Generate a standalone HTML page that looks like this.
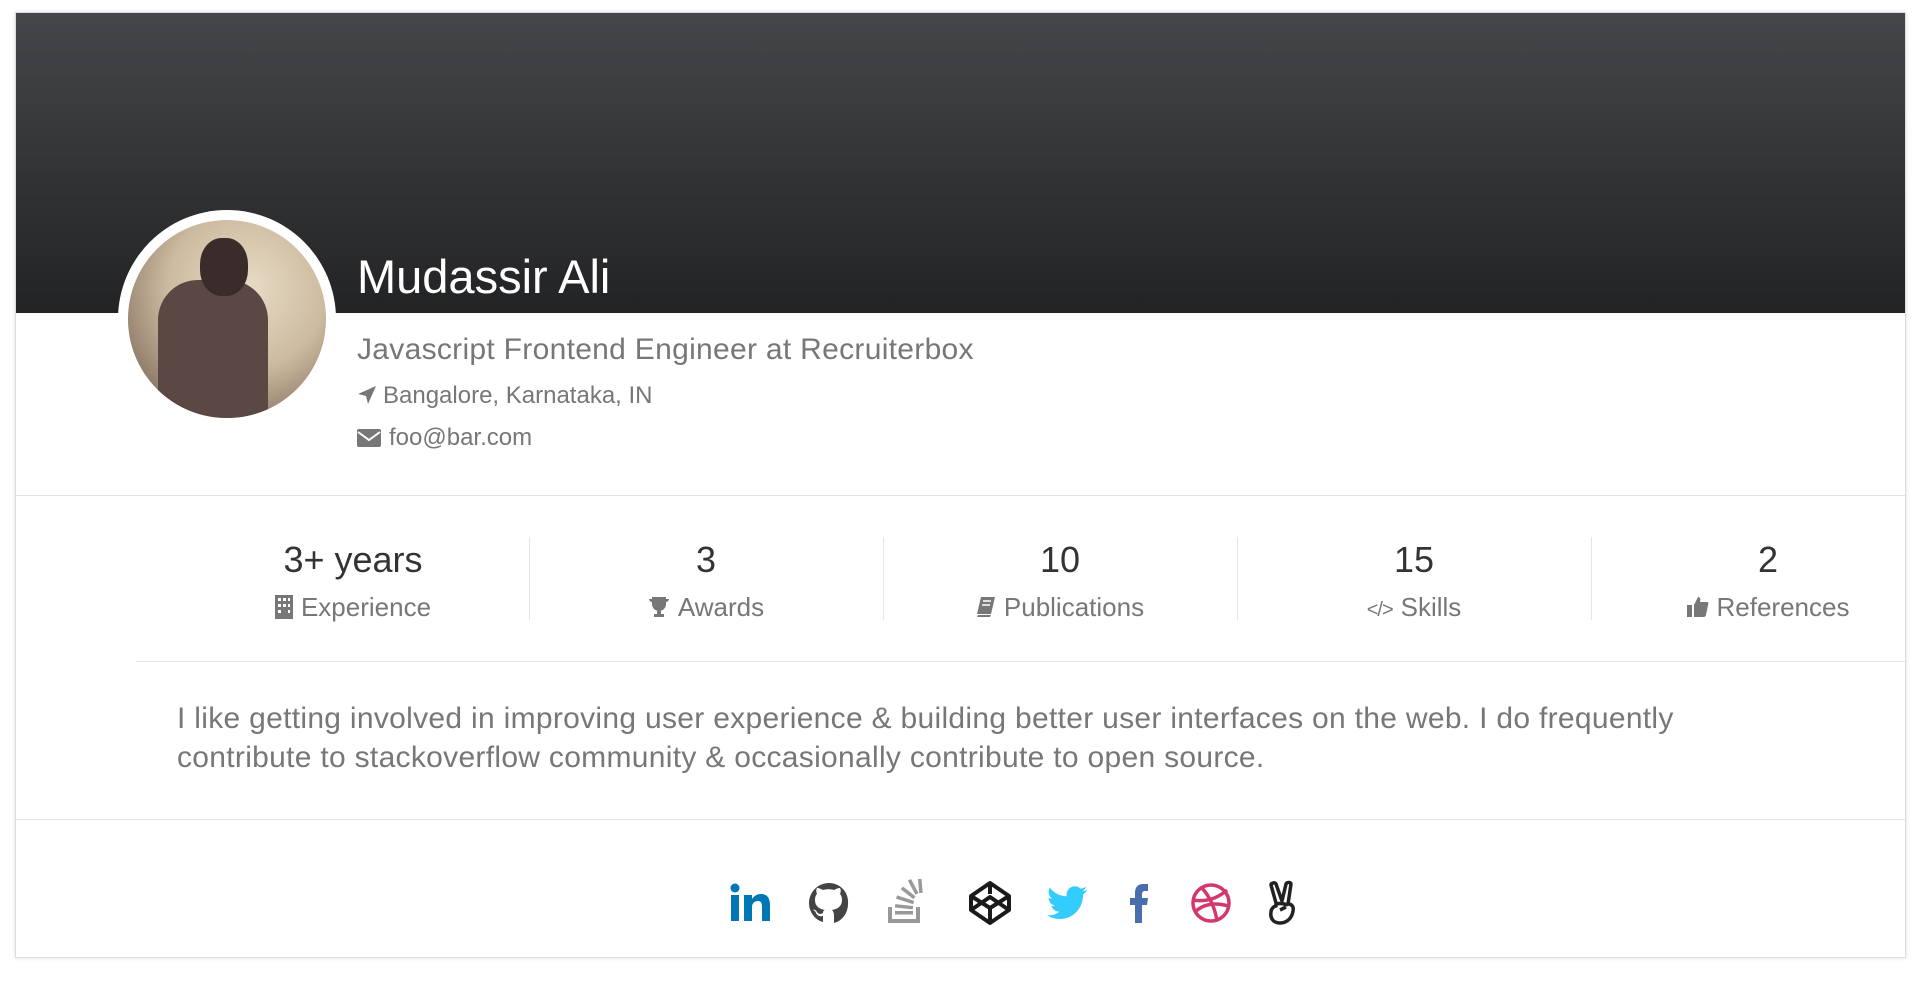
<!DOCTYPE html>
<html><head><meta charset="utf-8"><style>
*{margin:0;padding:0;box-sizing:border-box}
body{width:1926px;height:986px;background:#fff;font-family:"Liberation Sans",sans-serif;position:relative;overflow:hidden}
.card{position:absolute;left:15px;top:12px;width:1891px;height:946px;border:1px solid #ddd;box-shadow:0 0 4px rgba(0,0,0,.12);overflow:hidden;background:#fff}
.hdr{position:absolute;left:0;top:0;width:100%;height:300px;background:linear-gradient(#454649,#222325)}
.av{position:absolute;left:102px;top:197px;width:218px;height:218px;border-radius:50%;background:#fff}
.av .ph{position:absolute;left:10px;top:10px;width:198px;height:198px;border-radius:50%;background:radial-gradient(circle at 60% 35%,#e8dcc6 0%,#cdbba0 45%,#8a7565 80%);overflow:hidden}
.av .body{position:absolute;left:30px;top:60px;width:110px;height:150px;background:#5b4845;border-radius:40px 40px 0 0}
.av .head{position:absolute;left:72px;top:18px;width:48px;height:58px;background:#3a2c2a;border-radius:45%}
.name{position:absolute;left:341px;top:236px;color:#fff;font-size:47px}
.t{position:absolute;color:#777}
.vs{position:absolute;top:524px;width:1px;height:83px;background:#e6e6e6}
.col{position:absolute;top:525px;width:354px;text-align:center}
.num{font-size:36px;color:#333;line-height:44px}
.lab{font-size:26px;color:#777;margin-top:10px}
.hr{position:absolute;height:1px;background:#e4e4e4}
.ic{position:absolute;top:866px;width:48px;height:48px}
</style></head><body>
<div class="card">
<div class="hdr"></div>
<div class="av"><div class="ph"><div class="body"></div><div class="head"></div></div></div>
<div class="name">Mudassir Ali</div>
<div class="t" style="left:341px;top:320px;font-size:30px;letter-spacing:0.3px">Javascript Frontend Engineer at Recruiterbox</div>
<div class="t" style="left:341px;top:369px;font-size:24px"><svg width="20" height="20" viewBox="0 0 20 20" style="vertical-align:-2px;margin-right:6px"><path d="M19 1L1 9l8 2 2 8z" fill="#777"/></svg>Bangalore, Karnataka, IN</div>
<div class="t" style="left:341px;top:411px;font-size:24px"><svg width="24" height="18" viewBox="0 0 24 18" style="vertical-align:-2px;margin-right:8px"><rect x="0" y="0" width="24" height="18" rx="2" fill="#777"/><path d="M1 3l11 8 11-8" stroke="#fff" stroke-width="2" fill="none"/></svg>foo@bar.com</div>
<div class="hr" style="left:0;top:482px;width:100%"></div>
<div class="col" style="left:160px"><div class="num">3+ years</div><div class="lab"><svg width="18" height="24" viewBox="0 0 18 24" style="vertical-align:-3px;margin-right:8px"><rect width="18" height="24" fill="#777"/><g fill="#fff"><rect x="3" y="3" width="3" height="3"/><rect x="8" y="3" width="3" height="3"/><rect x="13" y="3" width="2" height="3"/><rect x="3" y="9" width="3" height="3"/><rect x="8" y="9" width="3" height="3"/><rect x="13" y="9" width="2" height="3"/><rect x="3" y="15" width="3" height="3"/><rect x="13" y="15" width="2" height="3"/></g></svg>Experience</div></div>
<div class="vs" style="left:513px"></div>
<div class="col" style="left:513px"><div class="num">3</div><div class="lab"><svg width="22" height="22" viewBox="0 0 22 22" style="vertical-align:-2px;margin-right:8px"><path d="M4 1h14v7a7 7 0 0 1-14 0zM1 3h3v3a3 3 0 0 1-3-3zM18 3h3a3 3 0 0 1-3 3zM9 15h4v3h3v3H6v-3h3z" fill="#777"/></svg>Awards</div></div>
<div class="vs" style="left:867px"></div>
<div class="col" style="left:867px"><div class="num">10</div><div class="lab"><svg width="20" height="22" viewBox="0 0 20 22" style="vertical-align:-2px;margin-right:8px"><path d="M5 1h14l-4 17H1zM2 19h13l-1 2H1z" fill="#777"/><path d="M7 5h8M6 9h8" stroke="#fff" stroke-width="1.5"/></svg>Publications</div></div>
<div class="vs" style="left:1221px"></div>
<div class="col" style="left:1221px"><div class="num">15</div><div class="lab"><span style="font-size:20px;margin-right:8px;letter-spacing:-1px">&lt;/&gt;</span>Skills</div></div>
<div class="vs" style="left:1575px"></div>
<div class="col" style="left:1575px"><div class="num">2</div><div class="lab"><svg width="22" height="22" viewBox="0 0 22 22" style="vertical-align:-2px;margin-right:8px"><rect x="0" y="9" width="5" height="12" fill="#777"/><path d="M7 9l4-8c2 0 3 2 2 5h7c1 0 2 1 1 3l-2 10c0 1-1 2-3 2H7z" fill="#777"/></svg>References</div></div>
<div class="hr" style="left:120px;top:648px;width:1800px"></div>
<div class="t" style="left:161px;top:686px;font-size:30px;line-height:39px;width:1580px;letter-spacing:0.3px">I like getting involved in improving user experience &amp; building better user interfaces on the web. I do frequently contribute to stackoverflow community &amp; occasionally contribute to open source.</div>
<div class="hr" style="left:0;top:806px;width:100%"></div>
<div class="ic" style="left:711px"><svg width="48" height="48" viewBox="0 0 48 48"><circle cx="8" cy="9" r="4.5" fill="#0077b5"/><rect x="4" y="16" width="8" height="26" fill="#0077b5"/><path d="M17 16h8v4c2-3 5-5 9-5 6 0 9 4 9 11v16h-8V28c0-4-1-6-4-6s-6 2-6 6v14h-8z" fill="#0077b5"/></svg></div>
<div class="ic" style="left:789px"><svg width="48" height="48" viewBox="0 0 48 48"><path d="M24 4C13 4 4 13 4 24c0 9 6 17 14 19v-6c-4 1-6-1-7-3 0-1-2-3-3-3 1-1 3 0 4 2 2 3 4 2 6 1 0-2 1-3 2-3-6-1-10-4-10-10 0-3 1-5 2-6-1-2-1-4 0-6 2 0 4 1 6 2 3-1 8-1 11 0 2-1 4-2 6-2 1 2 1 4 0 6 1 1 2 3 2 6 0 6-4 9-10 10 1 1 2 3 2 5v8c8-2 14-10 14-19C44 13 35 4 24 4z" fill="#444"/></svg></div>
<div class="ic" style="left:866px"><svg width="48" height="48" viewBox="0 0 48 48" fill="#999"><path d="M6 28h4v12h24V28h4v16H6z"/><rect x="13" y="32" width="18" height="3.5"/><rect x="13" y="26" width="18" height="3.5" transform="rotate(6 22 28)"/><rect x="14" y="19" width="18" height="3.5" transform="rotate(18 23 21)"/><rect x="18" y="12" width="16" height="3.5" transform="rotate(38 26 14)"/><rect x="23" y="6" width="16" height="3.5" transform="rotate(62 31 8)"/><rect x="30" y="4" width="16" height="3.5" transform="rotate(85 38 6)"/></svg></div>
<div class="ic" style="left:950px"><svg width="48" height="48" viewBox="0 0 48 48" fill="none" stroke="#1a1a1a" stroke-width="4" stroke-linejoin="round"><path d="M24 4L43 17v14L24 44 5 31V17z"/><path d="M24 4v11M5 17l19 12 19-12M5 31l19-13 19 13M24 44V29"/></svg></div>
<div class="ic" style="left:1027px"><svg width="48" height="48" viewBox="0 0 48 48"><path d="M44 11c-1.5.7-3 1-4.7 1.3 1.7-1 3-2.6 3.6-4.5-1.6 1-3.3 1.6-5.2 2A8.2 8.2 0 0 0 23.8 17.3 23.3 23.3 0 0 1 6.8 8.8a8.2 8.2 0 0 0 2.5 11c-1.3 0-2.6-.4-3.7-1 0 4 2.8 7.3 6.6 8-1.200.4-2.5.4-3.7.2 1 3.3 4 5.6 7.7 5.7A16.5 16.5 0 0 1 4 36.1 23.3 23.3 0 0 0 16.6 40c15 0 23.4-12.5 23.4-23.4v-1c1.6-1.2 3-2.6 4-4.2z" fill="#33ccff"/></svg></div>
<div class="ic" style="left:1099px"><svg width="48" height="48" viewBox="0 0 48 48"><path d="M20 44V26h-5v-7h5v-5c0-6 3-9 8-9h5v7h-3c-2 0-3 1-3 3v4h6l-1 7h-5v18z" fill="#4a6ead"/></svg></div>
<div class="ic" style="left:1171px"><svg width="48" height="48" viewBox="0 0 48 48" fill="none" stroke="#d4376e" stroke-width="3.5"><circle cx="24" cy="24" r="18"/><path d="M15 9c8 9 13 20 15 33M6 21c12 2 24-1 34-10M8 33c8-8 20-10 33-6"/></svg></div>
<div class="ic" style="left:1246px"><svg width="48" height="48" viewBox="0 0 48 48" fill="none" stroke="#222" stroke-width="3.5" stroke-linejoin="round"><path d="M14 24L9 6c0-2 4-3 5-1l6 17 4-17c1-2 5-2 5 0l-3 20c4 0 6 3 5 7-1 7-6 12-13 12-7 0-10-5-9-11 0-3 3-6 5-6z"/><path d="M14 25c4-1 9 0 12 1M18 31l6-3"/></svg></div>
</div>
</body></html>
